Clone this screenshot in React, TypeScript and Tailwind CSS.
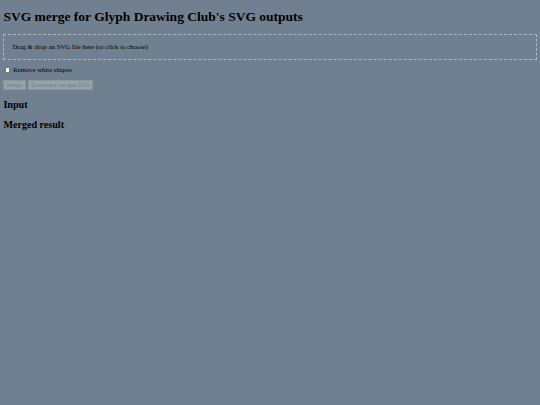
export default function App() {
  return (
    <div className="min-h-[405px] w-[540px] bg-[#708090] text-black px-[3.4px] pt-[0.1px] pb-[3.4px]" style={{ fontFamily: '"Liberation Serif", "Times New Roman", serif' }}>
      <h1 className="text-[13.5px] font-bold leading-[15.5px] mt-[9px] mb-[9px]">SVG merge for Glyph Drawing Club's SVG outputs</h1>
      <div className="border border-dashed border-[#aeb6c0] px-[8px] py-[8.3px] text-[6.75px] leading-[7.8px]">
        Drag &amp; drop an SVG file here (or click to choose)
      </div>
      <div className="mt-[6px] flex items-center text-[6.75px] leading-[7.8px]">
        <span className="ml-[1.6px] mr-[2.5px] w-[5.5px] h-[5.5px] bg-white border-[0.5px] border-[#767676] rounded-[1px]" />
        <span>Remove white shapes</span>
      </div>
      <div className="mt-[6px] flex gap-[2px] text-[5.5px] leading-[6px]" style={{ fontFamily: '"Liberation Sans", Arial, sans-serif' }}>
        <span className="px-[2.5px] py-[1px] bg-[rgba(239,239,239,0.3)] border-[0.5px] border-[rgba(118,118,118,0.3)] text-[rgba(16,16,16,0.3)] rounded-[1px]">Merge</span>
        <span className="px-[2.5px] py-[1px] bg-[rgba(239,239,239,0.3)] border-[0.5px] border-[rgba(118,118,118,0.3)] text-[rgba(16,16,16,0.3)] rounded-[1px]">Download merged SVG</span>
      </div>
      <h2 className="text-[10.1px] font-bold leading-[11.6px] mt-[9px] mb-[8.4px]">Input</h2>
      <h2 className="text-[10.1px] font-bold leading-[11.6px] mt-[8.4px] mb-[8.4px]">Merged result</h2>
    </div>
  );
}
